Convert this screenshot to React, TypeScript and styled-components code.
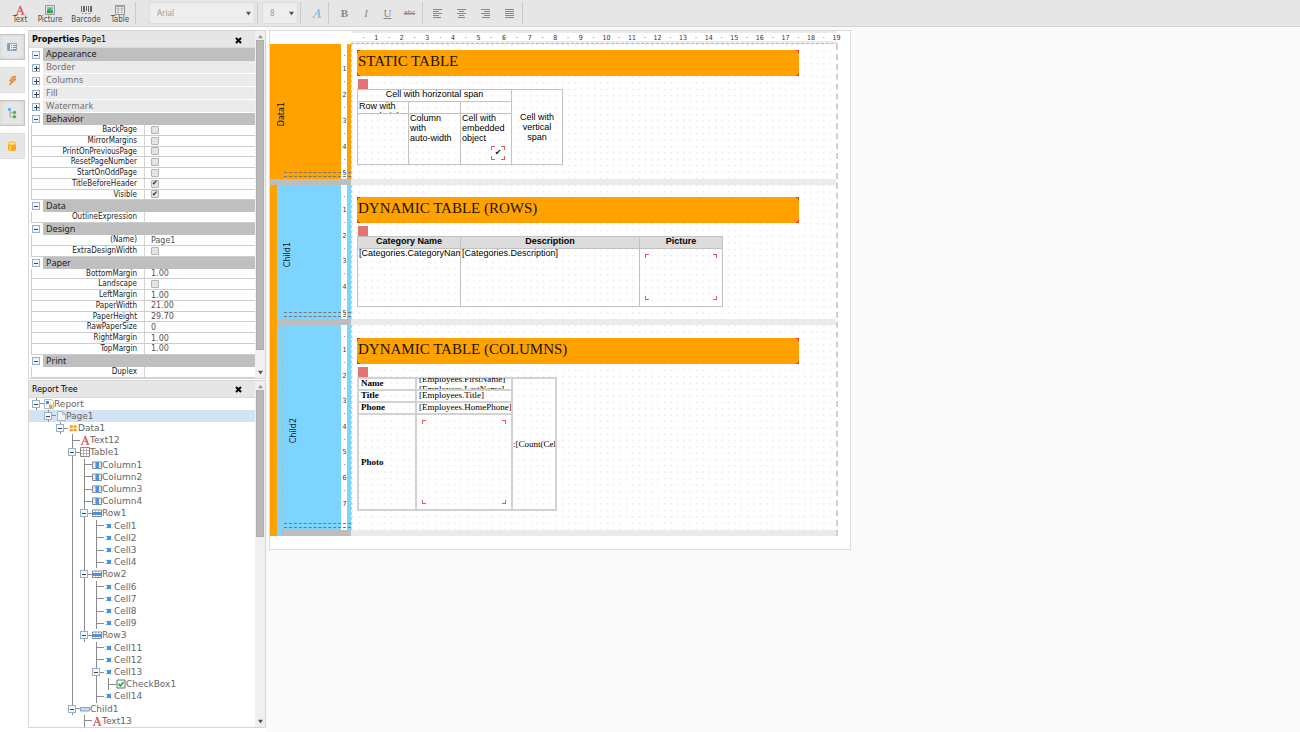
import React from 'react';
import styled, { createGlobalStyle, css } from 'styled-components';

const GlobalStyle = createGlobalStyle`
  * { box-sizing: border-box; }
  body { margin: 0; background: #fff; font: 8px/10px "DejaVu Sans", Verdana, sans-serif; color: #1a1a1a; }
  button, input, select { font: inherit; color: inherit; margin: 0; padding: 0; border: 0; background: none; }
`;

const CONDENSED = '"DejaVu Sans Condensed", "DejaVu Sans", sans-serif';

const App = styled.div`
  display: flex;
  flex-direction: column;
  height: 100vh;
  min-height: 600px;
`;

/* ---------- toolbar ---------- */

const Toolbar = styled.header`
  display: flex;
  align-items: center;
  height: 27px;
  flex: none;
  padding-left: 6px;
  background: #e6e6e6;
  border-bottom: 1px solid #d4d4d4;
`;
const ToolButton = styled.button<{ $width: number }>`
  display: flex;
  flex-direction: column;
  align-items: center;
  width: ${(p) => p.$width}px;
  padding-top: 4px;
  font: 8px/10px ${CONDENSED};
  color: #4c4c4c;
`;
const Separator = styled.i<{ $before?: number; $after?: number }>`
  width: 1px;
  height: 22px;
  margin: 0 ${(p) => p.$after ?? 0}px 0 ${(p) => p.$before ?? 0}px;
  background: #cacaca;
`;
const SelectBox = styled.label<{ $width: number }>`
  display: flex;
  align-items: center;
  width: ${(p) => p.$width}px;
  height: 22px;
  padding: 0 3px 0 7px;
  background: #eee;
  border: 1px solid #dcdcdc;
  color: #999;
  font: 8px/10px "Noto Sans", sans-serif;
  select { flex: 1; min-width: 0; appearance: none; outline: none; }
  svg { flex: none; }
`;
const FormatButton = styled.button<{ $width: number }>`
  display: flex;
  align-items: center;
  justify-content: center;
  width: ${(p) => p.$width}px;
  height: 22px;
  color: #888;
  font: 11px/12px "Liberation Serif", serif;
`;
const Strike = styled.s`
  font: 7px/8px "Liberation Sans", sans-serif;
`;

/* ---------- work area ---------- */

const Main = styled.main`
  display: flex;
  flex: 1;
  min-height: 0;
`;
const SideTabs = styled.nav`
  display: flex;
  flex-direction: column;
  gap: 7px;
  flex: none;
  width: 28px;
  padding-top: 7px;
`;
const SideTab = styled.button<{ $active?: boolean }>`
  display: flex;
  align-items: center;
  justify-content: center;
  width: 25px;
  height: 26px;
  background: #e6e6e6;
  border: 1px solid ${(p) => (p.$active ? '#c2c2c2' : '#dedede')};
  border-left: 0;
  box-shadow: ${(p) => (p.$active ? 'inset 0 0 3px #ccc' : 'none')};
`;
const Panels = styled.div`
  display: flex;
  flex-direction: column;
  gap: 1px;
  flex: none;
  width: 238px;
  padding: 3px 0 4px;
`;
const Panel = styled.section`
  display: flex;
  flex: 1 1 0;
  min-height: 0;
  border: 1px solid #d6d6d6;
`;
const PanelContent = styled.div`
  display: flex;
  flex-direction: column;
  flex: 1;
  min-width: 0;
`;
const PanelHeader = styled.header`
  display: flex;
  align-items: center;
  justify-content: space-between;
  flex: none;
  height: 17px;
  padding: 2px 13px 0 3px;
  background: #e6e6e6;
  border-bottom: 1px solid #d9d9d9;
  color: #000;
`;
const Title = styled.h2`
  margin: 0;
  font-size: 8px;
  font-weight: 400;
`;
const CloseButton = styled.button`
  display: flex;
`;
const Scrollbar = styled.div`
  display: flex;
  flex-direction: column;
  align-items: center;
  flex: none;
  width: 10px;
  padding: 3px 0;
  background: #f0f0f0;
`;
const Thumb = styled.i<{ $height: number }>`
  width: 8px;
  height: ${(p) => p.$height}px;
  margin: 1px 0 auto;
  background: #b9b9b9;
  border: 1px solid #adadad;
`;

const PropertyList = styled.div`
  display: flex;
  flex-direction: column;
  flex: 1;
  min-height: 0;
  overflow: hidden;
  padding-left: 2px;
`;
const Category = styled.div<{ $height: number }>`
  display: flex;
  align-items: center;
  flex: none;
  height: ${(p) => p.$height}px;
  padding-left: 1px;
  gap: 3px;
`;
const CategoryName = styled.h3<{ $open: boolean }>`
  flex: 1;
  align-self: stretch;
  margin: 0;
  padding-left: 3px;
  border-bottom: ${(p) => (p.$open ? 0 : 1)}px solid #fff;
  background: ${(p) => (p.$open ? '#bfbfbf' : '#ebebeb')};
  color: ${(p) => (p.$open ? '#222' : '#707070')};
  font: 400 9px/12px "Noto Sans", "DejaVu Sans", sans-serif;
`;
const PropertyRow = styled.div`
  display: flex;
  flex: 0 1 11px;
  min-height: 0;
  border: 1px solid #cdcdcd;
  border-width: 0 0 1px 1px;
`;
const PropertyLabel = styled.label`
  width: 113px;
  padding-right: 7px;
  border-right: 1px solid #d5d5d5;
  text-align: right;
  white-space: nowrap;
  font: 8px/10px ${CONDENSED};
`;
const PropertyValue = styled.div`
  display: flex;
  align-items: center;
  flex: 1;
  min-width: 0;
  padding-left: 6px;
  color: #555;
`;
const TextValue = styled.input`
  width: 90px;
  height: 10px;
  padding-top: 1px;
  outline: none;
`;
const Tick = styled.input`
  appearance: none;
  display: flex;
  align-items: center;
  justify-content: center;
  width: 8px;
  height: 8px;
  background: #e4e4e4;
  border: 1px solid #b4b4b4;
  border-radius: 1px;
  &:checked::before { content: "✔"; color: #222; font: 7px/7px "DejaVu Sans", sans-serif; }
`;
const Expander = styled.button`
  position: relative;
  display: flex;
  align-items: center;
  justify-content: center;
  flex: none;
  width: 8px;
  height: 8px;
  background: #f2f7fd;
  border: 1px solid #97b0d2;
  color: #333;
`;

/* ---------- report tree ---------- */

const TreeList = styled.ul`
  display: grid;
  grid-auto-rows: 1fr;
  flex: 1;
  min-height: 0;
  margin: 0;
  padding: 0;
  list-style: none;
  overflow: hidden;
`;
const TreeItem = styled.li<{ $selected: boolean }>`
  display: flex;
  align-items: center;
  min-height: 0;
  padding-left: 1px;
  background: ${(p) => (p.$selected ? '#d3e2f4' : 'transparent')};
  color: #666;
  font-size: 9px;
`;
const Guide = styled.i<{ $line: boolean }>`
  align-self: stretch;
  flex: none;
  width: 12px;
  background: ${(p) => (p.$line ? 'linear-gradient(#8c8c8c, #8c8c8c) 6px 0 / 1px 100% no-repeat' : 'none')};
`;
const Branch = styled.span`
  display: flex;
  align-items: center;
  align-self: stretch;
  flex: none;
  width: 14px;
  padding-left: 2px;
  background:
    linear-gradient(#8c8c8c, #8c8c8c) 6px 0 / 1px 100% no-repeat,
    linear-gradient(#8c8c8c, #8c8c8c) 6px 50% / 8px 1px no-repeat;
`;
const TreeIcon = styled.svg`
  flex: none;
  width: 10px;
  height: 10px;
`;

/* ---------- designer canvas ---------- */

const Designer = styled.div`
  flex: 1;
  min-width: 0;
  padding: 3px;
  background: #fafafa;
`;
const Sheet = styled.div`
  width: 582px;
  padding-bottom: 13px;
  background: #fff;
  border: 1px solid #dcdcdc;
`;
const RulerRow = styled.div`
  display: grid;
  grid-template-columns: repeat(38, 1fr);
  align-items: center;
  height: 13px;
  margin-left: 81px;
  padding: 1px 7px 0 6px;
  background:
    repeating-linear-gradient(to right, #bbb 0 3px, transparent 3px 5px) 0 100% / calc(100% - 13px) 1px no-repeat,
    linear-gradient(#ebebeb 2px, #fff 2px, #fff 10px, #ebebeb 10px) 0 0 / calc(100% - 13px) 100% no-repeat;
`;
const Mark = styled.span`
  display: flex;
  align-items: center;
  justify-content: center;
  min-width: 0;
  min-height: 0;
  color: #333;
  font: 7px/8px ${CONDENSED};
`;
const Bands = styled.div`
  margin-right: 12px;
  border-right: 2px dashed #cfcfcf;
`;
const BandGroup = styled.div`
  display: flex;
`;
const ParentStrip = styled.i<{ $color: string; $edge?: boolean }>`
  flex: none;
  width: ${(p) => (p.$edge ? 6 : 7)}px;
  background: ${(p) => p.$color};
  border-right: ${(p) => (p.$edge ? '1px dashed #a9bcc6' : '0')};
`;
const BandColumn = styled.div`
  flex: 1;
  min-width: 0;
`;
const BandRow = styled.div`
  position: relative;
  display: flex;
`;
const BandHeader = styled.div<{ $color: string; $width: number; $textAt: number }>`
  display: flex;
  align-items: center;
  flex: none;
  width: ${(p) => p.$width}px;
  padding-left: ${(p) => p.$textAt}px;
  background: ${(p) => p.$color};
`;
const BandName = styled.span`
  writing-mode: vertical-rl;
  transform: rotate(180deg);
  padding-bottom: 6px;
  color: #111;
`;
const VerticalRuler = styled.div<{ $color: string; $tail: number }>`
  display: grid;
  grid-auto-rows: 1fr;
  flex: none;
  width: 10px;
  padding: 6px 3px ${(p) => p.$tail}px 0;
  background: linear-gradient(to right, #fff 6px, ${(p) => p.$color} 6px);
`;
const Resizer = styled.i<{ $left: number }>`
  position: absolute;
  bottom: 2px;
  left: ${(p) => p.$left}px;
  width: 67px;
  height: 5px;
  border: 1px dashed #777;
  border-width: 1px 0;
`;
const BandBody = styled.div<{ $top: number; $height: number }>`
  position: relative;
  display: flex;
  flex-direction: column;
  align-items: flex-start;
  flex: 1;
  min-width: 0;
  min-height: ${(p) => p.$height}px;
  padding: ${(p) => p.$top}px 0 0 5px;
  border-left: 1px dashed #ccc;
`;
const Dots = styled.svg`
  position: absolute;
  inset: 0;
  width: 100%;
  height: 100%;
`;
const Splitter = styled.div<{ $dark: number }>`
  height: 6px;
  background: linear-gradient(to right, #bdbdbd ${(p) => p.$dark}px, #ebebeb ${(p) => p.$dark}px);
`;

const corners = (size: number, color: string) => css`
  background-image: ${Array(8).fill(`linear-gradient(${color}, ${color})`).join(', ')};
  background-repeat: no-repeat;
  background-position: 0 0, 0 0, 100% 0, 100% 0, 0 100%, 0 100%, 100% 100%, 100% 100%;
  background-size: ${Array(4).fill(`${size}px 1px, 1px ${size}px`).join(', ')};
`;
const ReportTitle = styled.div`
  position: relative;
  width: 442px;
  height: 26px;
  padding: 2px 1px;
  color: #1c1300;
  background-color: #ffa200;
  ${corners(3, '#e23b2e')}
  font: 15px/18px "Liberation Serif", "Times New Roman", serif;
`;
const TableHandle = styled.i`
  position: relative;
  width: 10px;
  height: 10px;
  margin: 3px 0 0 1px;
  background: #e57373;
`;
const ReportTable = styled.table<{ $width: number; $serif?: boolean }>`
  position: relative;
  width: ${(p) => p.$width}px;
  table-layout: fixed;
  border-collapse: collapse;
  color: #000;
  font: 9px/10px ${(p) => (p.$serif ? '"Liberation Serif", "Times New Roman", serif' : '"Liberation Sans", Arial, sans-serif')};
  td, th {
    padding: 0;
    border: ${(p) => (p.$serif ? 2 : 1)}px solid ${(p) => (p.$serif ? '#d2d2d2' : '#c2c2c2')};
    vertical-align: top;
    text-align: left;
    font-weight: 400;
  }
  thead th { background: #dcdcdc; }
`;
const Cell = styled.div<{ $height: number; $align?: string; $bold?: boolean; $pad?: number; $middle?: boolean }>`
  display: flex;
  flex-direction: column;
  justify-content: ${(p) => (p.$middle ? 'center' : 'flex-start')};
  height: ${(p) => p.$height + 1}px;
  margin-top: -1px;
  padding: 0 ${(p) => p.$pad ?? 1}px;
  overflow: hidden;
  font-weight: ${(p) => (p.$bold ? 700 : 400)};
  text-align: ${(p) => p.$align ?? 'left'};
  white-space: pre;
`;
const PictureSlot = styled.div<{ $height: number }>`
  height: ${(p) => p.$height}px;
  margin: 5px;
  ${corners(4, '#dc5a5a')}
`;
const CheckObject = styled.input`
  appearance: none;
  display: flex;
  align-items: center;
  justify-content: center;
  align-self: flex-end;
  width: 14px;
  height: 14px;
  margin: 3px 5px 0 0;
  background-color: #fff;
  ${corners(4, '#dc5a5a')}
  &:checked::before { content: "✔"; color: #111; font: 8px/8px "DejaVu Sans", sans-serif; }
`;

/* ---------- drawings ---------- */

const LetterA = ({ color = '#d9605a' }: { color?: string }) => (
  <TreeIcon viewBox="0 0 10 10" fill="none" stroke={color}>
    <path d="M2 9 5 1.500" strokeWidth=".9" />
    <path d="M4.800 1 8 9" strokeWidth="1.900" />
    <path d="M3 6.400h4M.6 9.400h2.800M6 9.400h3.600" strokeWidth=".9" />
  </TreeIcon>
);
const PictureIcon = () => (
  <svg width="10" height="10" viewBox="0 0 11 11">
    <path d="M.5.500h10v10H.5z" fill="#f4f4f4" stroke="#888" />
    <path d="M2 2h7v7H2z" fill="#7fbbe6" />
    <path d="M2 9V6.500l2-2 2 2 1-1 2 2V9z" fill="#3d9a45" />
    <circle cx="5.500" cy="5" r="1.600" fill="#58b04a" />
  </svg>
);
const BarcodeIcon = () => (
  <svg width="11" height="10" viewBox="0 0 11 10" fill="#666">
    <path d="M0 1h1v6H0zM2 1h2v6H2zM5 1h1v5H5zM7 1h1v6H7zM9 1h2v6H9z" />
    <path d="M1 8h1.500v1H1zM4 8h2v1H4zM7.500 8h2v1h-2z" fill="#888" />
  </svg>
);
const GridIcon = () => (
  <svg width="10" height="10" viewBox="0 0 11 11" fill="#fff" stroke="#888">
    <path d="M.5.500h10v10H.5z" />
    <path d="M.5 3.500h10M.5 5.500h10M.5 8h10M3.500.500v10M7.500.500v10" strokeWidth=".6" />
    <path d="M.5 1.500h10" stroke="#999" />
  </svg>
);
const Arrow = ({ up, color = '#555' }: { up?: boolean; color?: string }) => (
  <svg width="5" height="5" viewBox="0 0 6 6" fill={color}>
    <path d={up ? 'M0 5h6L3 1z' : 'M0 1h6L3 5.500z'} />
  </svg>
);
const AlignIcon = ({ rows }: { rows: [number, number][] }) => (
  <svg width="9" height="9" viewBox="0 0 9 9" stroke="#888">
    {rows.map(([from, to], i) => (
      <path key={i} d={`M${from} ${i * 2 + 0.5}H${to}`} />
    ))}
  </svg>
);
const Sign = ({ plus }: { plus?: boolean }) => (
  <svg width="6" height="6" viewBox="0 0 6 6" stroke="#444">
    <path d={plus ? 'M1 3.500h5M3.500 1v5' : 'M1 3.500h4'} />
  </svg>
);
const CloseIcon = () => (
  <svg width="7" height="7" viewBox="0 0 7 7" stroke="#000" strokeWidth="2">
    <path d="M1 1l5 5M6 1 1 6" />
  </svg>
);
const SheetIcon = () => (
  <svg width="10" height="10" viewBox="0 0 10 10">
    <path d="M.5 1.500h9v7h-9z" fill="#eaf1f8" stroke="#8fa3ba" />
    <path d="M1 2h2v6H1z" fill="#7a9cc6" />
    <path d="M4 3.500h1M6 3.500h3M4 5.500h1M6 5.500h3M4 7.500h1M6 7.500h3" stroke="#6b8fb5" />
  </svg>
);
const BoltIcon = () => (
  <svg width="11" height="11" viewBox="0 0 11 11">
    <path d="M5.500 1.500h3.500L7 4.500h2L2.500 10 4.500 6H2.500z" fill="#f6a43a" stroke="#c9622a" strokeWidth=".6" />
  </svg>
);
const HierarchyIcon = () => (
  <svg width="11" height="12" viewBox="0 0 11 12">
    <path d="M3 4v6h3M3 6h3" fill="none" stroke="#999" strokeWidth=".8" />
    <path d="M1 1h3v3H1z" fill="#6fb4e8" />
    <circle cx="7.500" cy="5.500" r="1.700" fill="#4fb34a" />
    <circle cx="7.500" cy="9.700" r="1.700" fill="#4fb34a" />
  </svg>
);
const DatabaseIcon = () => (
  <svg width="10" height="11" viewBox="0 0 10 11">
    <path d="M1 2.500v6c0 2 8 2 8 0v-6z" fill="#f6a81c" />
    <ellipse cx="5" cy="2.500" rx="4" ry="1.700" fill="#ffe08a" stroke="#f0a01a" strokeWidth=".6" />
    <path d="M3 4.600v5" stroke="#ffd562" strokeWidth="1.500" />
  </svg>
);

type IconKind = 'report' | 'page' | 'data' | 'text' | 'table' | 'column' | 'row' | 'cell' | 'check' | 'child';

const ICON_ART: Record<Exclude<IconKind, 'text'>, React.ReactNode> = {
  report: (
    <>
      <path d="M.5.500h7l2 2v7h-9z" fill="#fff" stroke="#a9bcd2" />
      <path d="M2 2h3v3H2z" fill="#2f9be0" />
      <path d="M5 5.500h3.500V9H5z" fill="#f6a51d" />
    </>
  ),
  page: <path d="M1.500.500h5l3 3v6h-8zM6.500.500v3h3" fill="#f0f4f9" stroke="#a8b4c2" />,
  data: <path d="M2 2.500h2.500v2H2zM5.800 2.500h2.500v2H5.800zM2 6h2.500v2H2zM5.800 6h2.500v2H5.800z" fill="#f5a21b" stroke="#f5a21b" strokeWidth=".6" />,
  table: (
    <>
      <path d="M.5.500h9v9h-9z" fill="#fff" stroke="#888" />
      <path d="M.5 3.500h9M.5 6.500h9M3.500.500v9M6.500.500v9" stroke="#999" strokeWidth=".7" />
    </>
  ),
  column: (
    <>
      <path d="M.5 2h9v6.500h-9z" fill="#fff" stroke="#7d8896" />
      <path d="M.5 4h9M.5 6.500h9" stroke="#aaa" strokeWidth=".6" />
      <path d="M3.500 2h3.500v6.500H3.500z" fill="#4b93dd" />
    </>
  ),
  row: (
    <>
      <path d="M.5 2h9v6.500h-9z" fill="#fff" stroke="#7d8896" />
      <path d="M3.500 2v6.500M6.500 2v6.500" stroke="#aaa" strokeWidth=".6" />
      <path d="M1 4h8v3H1z" fill="#4b93dd" />
    </>
  ),
  cell: (
    <>
      <path d="M1.500 3.300h7M1.500 6.700h7" stroke="#8ab6e6" strokeDasharray="1.500 .7" />
      <path d="M3 3h4v4H3z" fill="#4b93dd" />
    </>
  ),
  check: (
    <>
      <path d="M1 1h8v8H1z" fill="#fff" stroke="#55708c" />
      <path d="M2.500 4.800 4.300 7l3.200-4" fill="none" stroke="#22a02c" strokeWidth="1.500" />
    </>
  ),
  child: (
    <>
      <path d="M.5 3.500h9v3.500h-9z" fill="#a9cdee" stroke="#7296ba" strokeWidth=".8" />
      <path d="M1 5.200h8" stroke="#fff" strokeWidth=".7" />
    </>
  ),
};

/* ---------- data ---------- */

type Property = { name: string; value?: string; checked?: boolean };
type Group = { name: string; open: boolean; items: Property[] };

const tick = (name: string, checked = false): Property => ({ name, checked });
const text = (name: string, value: string): Property => ({ name, value });

const GROUPS: Group[] = [
  { name: 'Appearance', open: true, items: [] },
  { name: 'Border', open: false, items: [] },
  { name: 'Columns', open: false, items: [] },
  { name: 'Fill', open: false, items: [] },
  { name: 'Watermark', open: false, items: [] },
  {
    name: 'Behavior',
    open: true,
    items: [
      tick('BackPage'), tick('MirrorMargins'), tick('PrintOnPreviousPage'), tick('ResetPageNumber'),
      tick('StartOnOddPage'), tick('TitleBeforeHeader', true), tick('Visible', true),
    ],
  },
  { name: 'Data', open: true, items: [text('OutlineExpression', '')] },
  { name: 'Design', open: true, items: [text('(Name)', 'Page1'), tick('ExtraDesignWidth')] },
  {
    name: 'Paper',
    open: true,
    items: [
      text('BottomMargin', '1.00'), tick('Landscape'), text('LeftMargin', '1.00'), text('PaperWidth', '21.00'),
      text('PaperHeight', '29.70'), text('RawPaperSize', '0'), text('RightMargin', '1.00'), text('TopMargin', '1.00'),
    ],
  },
  { name: 'Print', open: true, items: [text('Duplex', '')] },
];

type Node = [label: string, icon: IconKind, level: number, open?: boolean, guides?: number[]];

const cells = (names: number[], guides: number[]): Node[] =>
  names.map((n) => [`Cell${n}`, 'cell', 5, false, guides]);

const TREE: Node[] = [
  ['Report', 'report', 0, true],
  ['Page1', 'page', 1, true],
  ['Data1', 'data', 2, true],
  ['Text12', 'text', 3],
  ['Table1', 'table', 3, true],
  ['Column1', 'column', 4, false, [3]],
  ['Column2', 'column', 4, false, [3]],
  ['Column3', 'column', 4, false, [3]],
  ['Column4', 'column', 4, false, [3]],
  ['Row1', 'row', 4, true, [3]],
  ...cells([1, 2, 3, 4], [3, 4]),
  ['Row2', 'row', 4, true, [3]],
  ...cells([6, 7, 8, 9], [3, 4]),
  ['Row3', 'row', 4, true, [3]],
  ...cells([11, 12], [3]),
  ['Cell13', 'cell', 5, true, [3]],
  ['CheckBox1', 'check', 6, false, [3, 5]],
  ...cells([14], [3]),
  ['Child1', 'child', 3, true],
  ['Text13', 'text', 4],
];

const ORANGE = '#ffa200';
const BLUE = '#7dd5ff';

/* ---------- parts ---------- */

const marks = (count: number) =>
  Array.from({ length: count }, (_, i) => <Mark key={i}>{i % 2 ? (i + 1) / 2 : '·'}</Mark>);

const PanelFrame = ({ title, thumb, children }: { title: React.ReactNode; thumb: number; children: React.ReactNode }) => (
  <Panel>
    <PanelContent>
      <PanelHeader>
        <Title>{title}</Title>
        <CloseButton aria-label="Close"><CloseIcon /></CloseButton>
      </PanelHeader>
      {children}
    </PanelContent>
    <Scrollbar>
      <Arrow up color="#999" />
      <Thumb $height={thumb} />
      <Arrow />
    </Scrollbar>
  </Panel>
);

type BandProps = {
  name: string; color: string; headerWidth: number; textAt: number; height: number;
  top: number; ticks: number; tail: number; title: string; children: React.ReactNode;
};

const Band = ({ name, color, headerWidth, textAt, height, top, ticks, tail, title, children }: BandProps) => (
  <>
    <BandRow>
      <BandHeader $color={color} $width={headerWidth} $textAt={textAt}>
        <BandName>{name}</BandName>
      </BandHeader>
      <VerticalRuler $color={color} $tail={tail}>{marks(ticks)}</VerticalRuler>
      <Resizer $left={headerWidth - 57} />
      <BandBody $top={top} $height={height}>
        <Dots viewBox="0 0 760 400" preserveAspectRatio="xMinYMin slice">
          <pattern id={`dots-${name}`} width="10" height="10" patternUnits="userSpaceOnUse">
            <path d="M0 0h2v2H0z" fill="#e2e2e2" />
          </pattern>
          <rect width="760" height="400" fill={`url(#dots-${name})`} />
        </Dots>
        <ReportTitle>{title}</ReportTitle>
        <TableHandle />
        {children}
      </BandBody>
    </BandRow>
    <Splitter $dark={headerWidth + 10} />
  </>
);

const Columns = ({ widths }: { widths: number[] }) => (
  <colgroup>{widths.map((w, i) => <col key={i} width={w} />)}</colgroup>
);

export default function ReportDesigner() {
  return (
    <App>
      <GlobalStyle />
      <Toolbar>
        <ToolButton $width={28}><LetterA />Text</ToolButton>
        <ToolButton $width={32}><PictureIcon />Picture</ToolButton>
        <ToolButton $width={40}><BarcodeIcon />Barcode</ToolButton>
        <ToolButton $width={28}><GridIcon />Table</ToolButton>
        <Separator $before={1} $after={13} />
        <SelectBox $width={106}>
          <select aria-label="Font" defaultValue="Arial"><option>Arial</option></select>
          <Arrow />
        </SelectBox>
        <Separator $before={2} $after={4} />
        <SelectBox $width={36}>
          <select aria-label="Font size" defaultValue="8"><option>8</option></select>
          <Arrow />
        </SelectBox>
        <Separator $before={2} $after={4} />
        <FormatButton $width={23} aria-label="Style">
          <svg width="10" height="10" viewBox="0 0 10 10" fill="none" stroke="#8dbfe4">
            <path d="M1.500 9 6.800 1.200" strokeWidth=".9" />
            <path d="M6.500 1 7.400 9" strokeWidth="1.900" />
            <path d="M3 6.200h4.400M.2 9.200h2.800M5.500 9.200h4" />
          </svg>
        </FormatButton>
        <Separator $after={5} />
        <FormatButton $width={21} aria-label="Bold"><b>B</b></FormatButton>
        <FormatButton $width={22}><i>I</i></FormatButton>
        <FormatButton $width={21}><u>U</u></FormatButton>
        <FormatButton $width={23}><Strike>abc</Strike></FormatButton>
        <Separator $before={1} $after={2} />
        <FormatButton $width={24} aria-label="Align left"><AlignIcon rows={[[0, 9], [0, 6], [0, 9], [0, 6], [0, 8]]} /></FormatButton>
        <FormatButton $width={24} aria-label="Align center"><AlignIcon rows={[[0, 9], [2, 7], [0, 9], [2, 7], [1, 8]]} /></FormatButton>
        <FormatButton $width={24} aria-label="Align right"><AlignIcon rows={[[0, 9], [3, 9], [0, 9], [3, 9], [1, 9]]} /></FormatButton>
        <FormatButton $width={24} aria-label="Justify"><AlignIcon rows={[[0, 9], [0, 9], [0, 9], [0, 9], [0, 9]]} /></FormatButton>
        <Separator $before={1} />
      </Toolbar>

      <Main>
        <SideTabs>
          <SideTab $active aria-label="Properties"><SheetIcon /></SideTab>
          <SideTab aria-label="Events"><BoltIcon /></SideTab>
          <SideTab $active aria-label="Report tree"><HierarchyIcon /></SideTab>
          <SideTab aria-label="Data"><DatabaseIcon /></SideTab>
        </SideTabs>

        <Panels>
          <PanelFrame title={<><b>Properties</b> Page1</>} thumb={310}>
            <PropertyList>
              {GROUPS.map((group) => (
                <React.Fragment key={group.name}>
                  <Category $height={group.items.length ? 12 : 13}>
                    <Expander aria-label={`Toggle ${group.name}`}><Sign plus={!group.open} /></Expander>
                    <CategoryName $open={group.open}>{group.name}</CategoryName>
                  </Category>
                  {group.items.map((item) => (
                    <PropertyRow key={item.name}>
                      <PropertyLabel htmlFor={item.name}>{item.name}</PropertyLabel>
                      <PropertyValue>
                        {item.value === undefined
                          ? <Tick type="checkbox" id={item.name} defaultChecked={item.checked} />
                          : <TextValue id={item.name} defaultValue={item.value} />}
                      </PropertyValue>
                    </PropertyRow>
                  ))}
                </React.Fragment>
              ))}
            </PropertyList>
          </PanelFrame>

          <PanelFrame title="Report Tree" thumb={147}>
            <TreeList>
              {TREE.map(([label, icon, level, open, guides = []]) => (
                <TreeItem key={label} $selected={label === 'Page1'}>
                  {Array.from({ length: level }, (_, i) => <Guide key={i} $line={guides.includes(i)} />)}
                  <Branch>{open && <Expander aria-label={`Toggle ${label}`}><Sign /></Expander>}</Branch>
                  {icon === 'text' ? <LetterA /> : <TreeIcon viewBox="0 0 10 10">{ICON_ART[icon]}</TreeIcon>}
                  {label}
                </TreeItem>
              ))}
            </TreeList>
          </PanelFrame>
        </Panels>

        <Designer>
          <Sheet>
            <RulerRow>{marks(38)}</RulerRow>
            <Bands>
              <Band name="Data1" color={ORANGE} headerWidth={71} textAt={7} height={135} top={6} ticks={10} tail={0} title="STATIC TABLE">
                <ReportTable $width={206}>
                  <Columns widths={[51, 52, 51, 51]} />
                  <tbody>
                    <tr>
                      <td colSpan={3}><Cell $height={11} $align="center">Cell with horizontal span</Cell></td>
                      <td rowSpan={3}><Cell $height={74} $align="center" $middle>{'Cell with\nvertical\nspan'}</Cell></td>
                    </tr>
                    <tr>
                      <td><Cell $height={11}>{'Row with\nauto-height'}</Cell></td>
                      <td />
                      <td />
                    </tr>
                    <tr>
                      <td />
                      <td><Cell $height={50}>{'Column\nwith\nauto-width'}</Cell></td>
                      <td>
                        <Cell $height={50}>
                          {'Cell with\nembedded\nobject'}
                          <CheckObject type="checkbox" defaultChecked aria-label="Embedded check box" />
                        </Cell>
                      </td>
                    </tr>
                  </tbody>
                </ReportTable>
              </Band>
              <BandGroup>
                <ParentStrip $color={ORANGE} />
                <BandColumn>
                  <Band name="Child1" color={BLUE} headerWidth={64} textAt={6} height={134} top={12} ticks={10} tail={0} title="DYNAMIC TABLE (ROWS)">
                    <ReportTable $width={366}>
                      <Columns widths={[103, 179, 83]} />
                      <thead>
                        <tr>
                          <th><Cell $height={11} $align="center" $bold>Category Name</Cell></th>
                          <th><Cell $height={11} $align="center" $bold>Description</Cell></th>
                          <th><Cell $height={11} $align="center" $bold>Picture</Cell></th>
                        </tr>
                      </thead>
                      <tbody>
                        <tr>
                          <td><Cell $height={57}>[Categories.CategoryName]</Cell></td>
                          <td><Cell $height={57}>[Categories.Description]</Cell></td>
                          <td><PictureSlot $height={46} /></td>
                        </tr>
                      </tbody>
                    </ReportTable>
                  </Band>
                  <BandGroup>
                    <ParentStrip $color={BLUE} $edge />
                    <BandColumn>
                      <Band name="Child2" color={BLUE} headerWidth={58} textAt={6} height={205} top={13} ticks={14} tail={20} title="DYNAMIC TABLE (COLUMNS)">
                        <ReportTable $width={200} $serif>
                          <Columns widths={[58, 96, 44]} />
                          <tbody>
                            <tr>
                              <th><Cell $height={10} $bold $pad={2}>Name</Cell></th>
                              <td><Cell $height={10} $pad={2} $middle>{'[Employees.FirstName]\n[Employees.LastName]'}</Cell></td>
                              <td rowSpan={4}><Cell $height={130} $pad={0} $middle>:[Count(Cell25)]</Cell></td>
                            </tr>
                            <tr>
                              <th><Cell $height={10} $bold $pad={2}>Title</Cell></th>
                              <td><Cell $height={10} $pad={2}>[Employees.Title]</Cell></td>
                            </tr>
                            <tr>
                              <th><Cell $height={10} $bold $pad={2}>Phone</Cell></th>
                              <td><Cell $height={10} $pad={2}>[Employees.HomePhone]</Cell></td>
                            </tr>
                            <tr>
                              <th><Cell $height={94} $bold $pad={2} $middle>Photo</Cell></th>
                              <td><PictureSlot $height={84} /></td>
                            </tr>
                          </tbody>
                        </ReportTable>
                      </Band>
                    </BandColumn>
                  </BandGroup>
                </BandColumn>
              </BandGroup>
            </Bands>
          </Sheet>
        </Designer>
      </Main>
    </App>
  );
}
